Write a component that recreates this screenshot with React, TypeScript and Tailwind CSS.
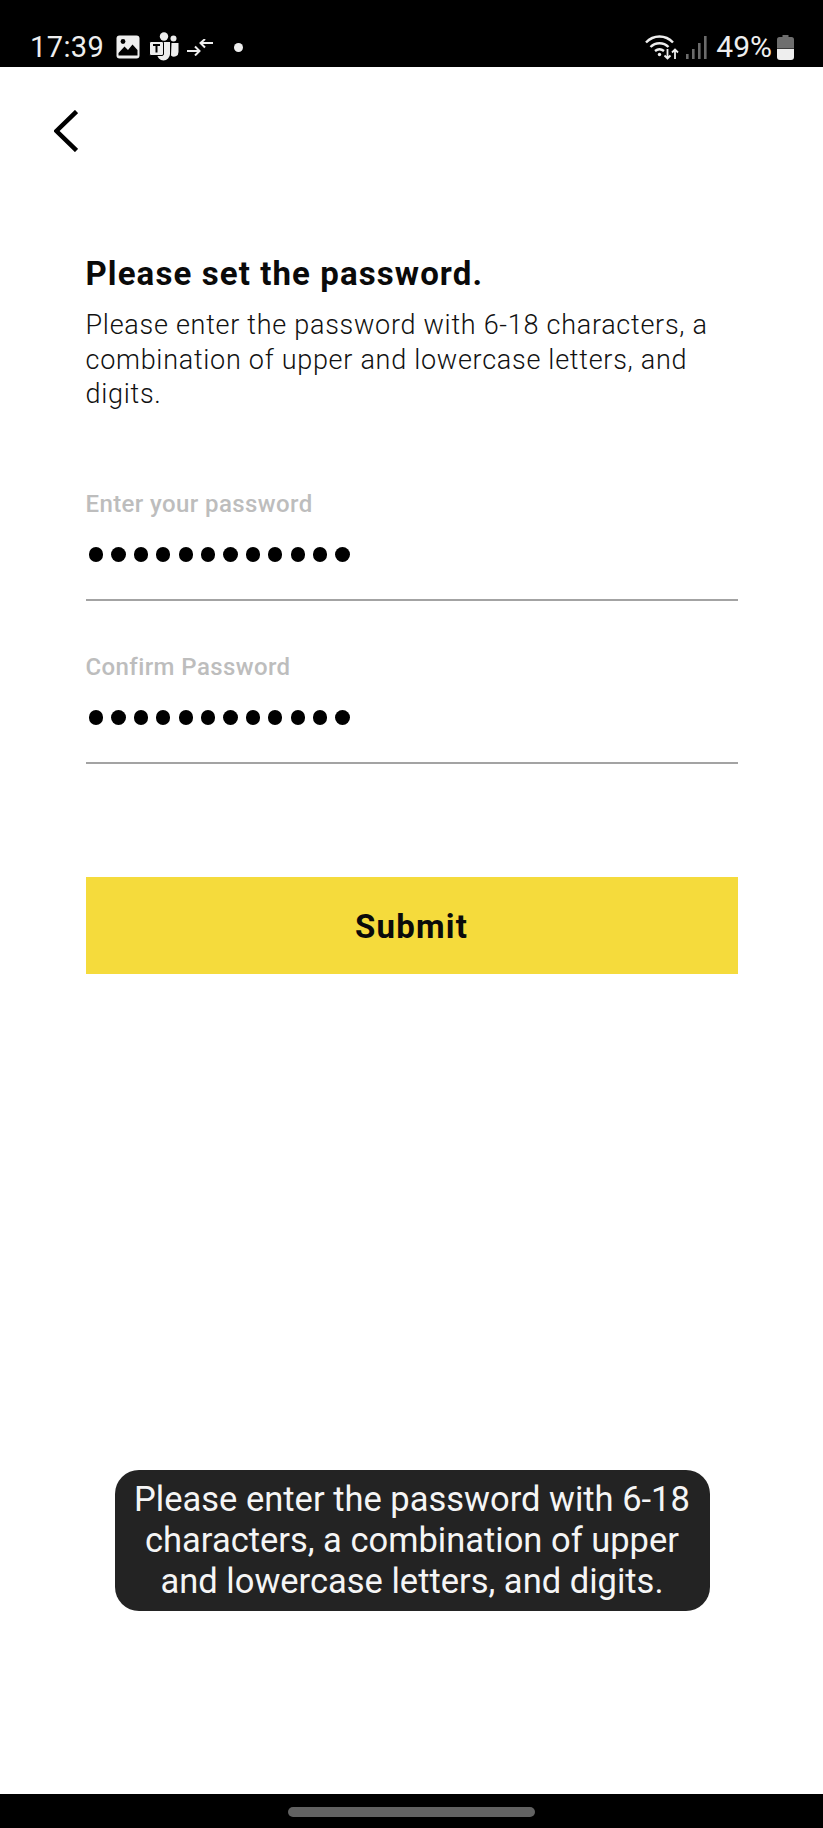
import React from "react";

const din = "font-['Roboto',sans-serif]";

function ImageIcon() {
  return (
    <svg width="24" height="24" viewBox="0 0 24 24" className="shrink-0">
      <rect x="0.5" y="0.5" width="23" height="23" rx="3" fill="#eee" />
      <circle cx="7" cy="6.5" r="2.4" fill="#000" />
      <path d="M2.5 20.5 L2.5 18 L8.5 11.5 L12 15 L16.5 9.5 L21.5 15 L21.5 20.5 Z" fill="#000" />
    </svg>
  );
}

function TeamsIcon() {
  return (
    <svg width="30" height="30" viewBox="0 0 30 30" className="shrink-0">
      <circle cx="15" cy="4.5" r="4.2" fill="#eee" />
      <circle cx="24.5" cy="6.5" r="3" fill="#eee" />
      <path d="M11 10 H21 V22 A6.5 6.5 0 0 1 8 22 V14 H11 Z" fill="#eee" />
      <path d="M22.5 11 H29.5 V20 A4.5 4.5 0 0 1 22 23.5 Z" fill="#eee" />
      <rect x="0.5" y="9.5" width="14" height="14" rx="1.5" fill="#eee" stroke="#000" strokeWidth="1" />
      <path d="M4 13 H11 M7.5 13 V20.5" stroke="#000" strokeWidth="2" fill="none" />
    </svg>
  );
}

function ArrowsIcon() {
  return (
    <svg width="26" height="17" viewBox="0 0 26 17" className="shrink-0" fill="none" stroke="#eee" strokeWidth="2">
      <path d="M0 12 H12 M8 7.5 L12.5 12 L8 16.5" />
      <path d="M26 4 H14 M18 0 L13.5 4 L18 8.5" />
    </svg>
  );
}

function WifiIcon() {
  return (
    <svg width="34" height="25" viewBox="0 0 34 25" className="shrink-0" fill="none" stroke="#eee" strokeWidth="2.4">
      <path d="M1 7.5 C8.5 -0.5 20.5 -0.5 28 7.5" />
      <path d="M5.5 12 C10.5 7 18.5 7 23.5 12" />
      <path d="M10 16 C13 13.6 16 13.6 19 16" />
      <circle cx="14.5" cy="19.5" r="1.7" fill="#eee" stroke="none" />
      <path d="M22.5 14 V23 M19.5 20.5 L22.5 23.5 L25.5 20.5" strokeWidth="1.8" />
      <path d="M30 24 V15 M27 17.5 L30 14.5 L33 17.5" strokeWidth="1.8" />
    </svg>
  );
}

function SignalIcon() {
  return (
    <svg width="21" height="23" viewBox="0 0 21 23" className="shrink-0" fill="#6b6b6b">
      <rect x="0" y="18" width="2.6" height="5" />
      <rect x="6" y="13" width="2.6" height="10" />
      <rect x="12" y="7" width="2.6" height="16" />
      <rect x="18" y="0" width="2.6" height="23" />
    </svg>
  );
}

function BatteryIcon() {
  return (
    <svg width="17" height="25" viewBox="0 0 17 25" className="shrink-0">
      <path d="M5.5 0 H11.5 V2 H14.5 A2.5 2.5 0 0 1 17 4.5 V13 H0 V4.5 A2.5 2.5 0 0 1 2.5 2 H5.5 Z" fill="#6e6e6e" />
      <path d="M0 13.8 H17 V22 A3 3 0 0 1 14 25 H3 A3 3 0 0 1 0 22 Z" fill="#eee" />
    </svg>
  );
}

function Dots() {
  return (
    <div className="flex h-[28px] items-center gap-[8.1px] pl-[3.5px]">
      {Array.from({ length: 12 }).map((_, i) => (
        <span key={i} className="size-[14.3px] rounded-full bg-black" />
      ))}
    </div>
  );
}

function Field({ label, className }: { label: string; className?: string }) {
  return (
    <div className={className}>
      <div className={`${din} h-[30px] text-[24px] leading-[30px] font-medium tracking-[0.4px] text-[#bdbdbd]`}>{label}</div>
      <div className="mt-[22px] h-[60px] border-b-2 border-[#a3a3a3]">
        <Dots />
      </div>
    </div>
  );
}

export default function App() {
  return (
    <div className="relative flex h-[1828px] w-[823px] flex-col overflow-hidden bg-white">
      <div className="flex h-[67px] shrink-0 items-center justify-between bg-black pt-[27px] pr-[29px] pl-[30px] font-['Roboto',sans-serif] text-[#eee]">
        <div className="flex items-center">
          <span className="text-[29px] leading-none tracking-[0.4px]">17:39</span>
          <span className="ml-[12px] flex items-center">
            <ImageIcon />
            <span className="ml-[9px]"><TeamsIcon /></span>
            <span className="ml-[8px]"><ArrowsIcon /></span>
            <span className="ml-[21px] size-[9px] rounded-full bg-[#eee]" />
          </span>
        </div>
        <div className="flex items-center">
          <WifiIcon />
          <span className="ml-[7px]"><SignalIcon /></span>
          <span className="ml-[9px] text-[30px] leading-none">49%</span>
          <span className="ml-[5px]"><BatteryIcon /></span>
        </div>
      </div>

      <div className="flex flex-1 flex-col px-[85.5px]">
        <button className="-ml-[32px] mt-[43px] h-[42px] w-[24px]" aria-label="Back">
          <svg width="24" height="42" viewBox="0 0 24 42" fill="none" stroke="#000" strokeWidth="4.5">
            <path d="M22.5 1.5 L2.5 21 L22.5 40.5" />
          </svg>
        </button>

        <h1 className={`${din} mt-[102px] text-[33px] leading-[40px] font-bold tracking-[1.1px] text-[#0a0a0a]`}>
          Please set the password.
        </h1>
        <p className={`${din} mt-[14px] w-[640px] text-[27px] leading-[34.5px] font-light tracking-[0.72px] text-[#111]`}>
          Please enter the password with 6-18 characters, a combination of upper and lowercase letters, and digits.
        </p>

        <Field label="Enter your password" className="mt-[77px]" />
        <Field label="Confirm Password" className="mt-[51px]" />

        <button className={`${din} mt-[113px] h-[97px] w-full bg-[#f5db3c] pt-[3px] text-[33px] font-bold tracking-[1.2px] text-[#0a0a0a]`}>
          Submit
        </button>
      </div>

      <div className="flex h-[34px] shrink-0 items-start justify-center bg-black pt-[13px]">
        <div className="h-[10px] w-[247px] rounded-full bg-[#626262]" />
      </div>

      <div className="absolute top-[1470px] left-[114.5px] flex h-[141px] w-[595px] items-center justify-center rounded-[24px] bg-[#232323] px-[8px] text-center font-['Roboto',sans-serif] text-[34.5px] leading-[41px] text-[#f5f5f5]">
        Please enter the password with 6-18 characters, a combination of upper and lowercase letters, and digits.
      </div>
    </div>
  );
}
